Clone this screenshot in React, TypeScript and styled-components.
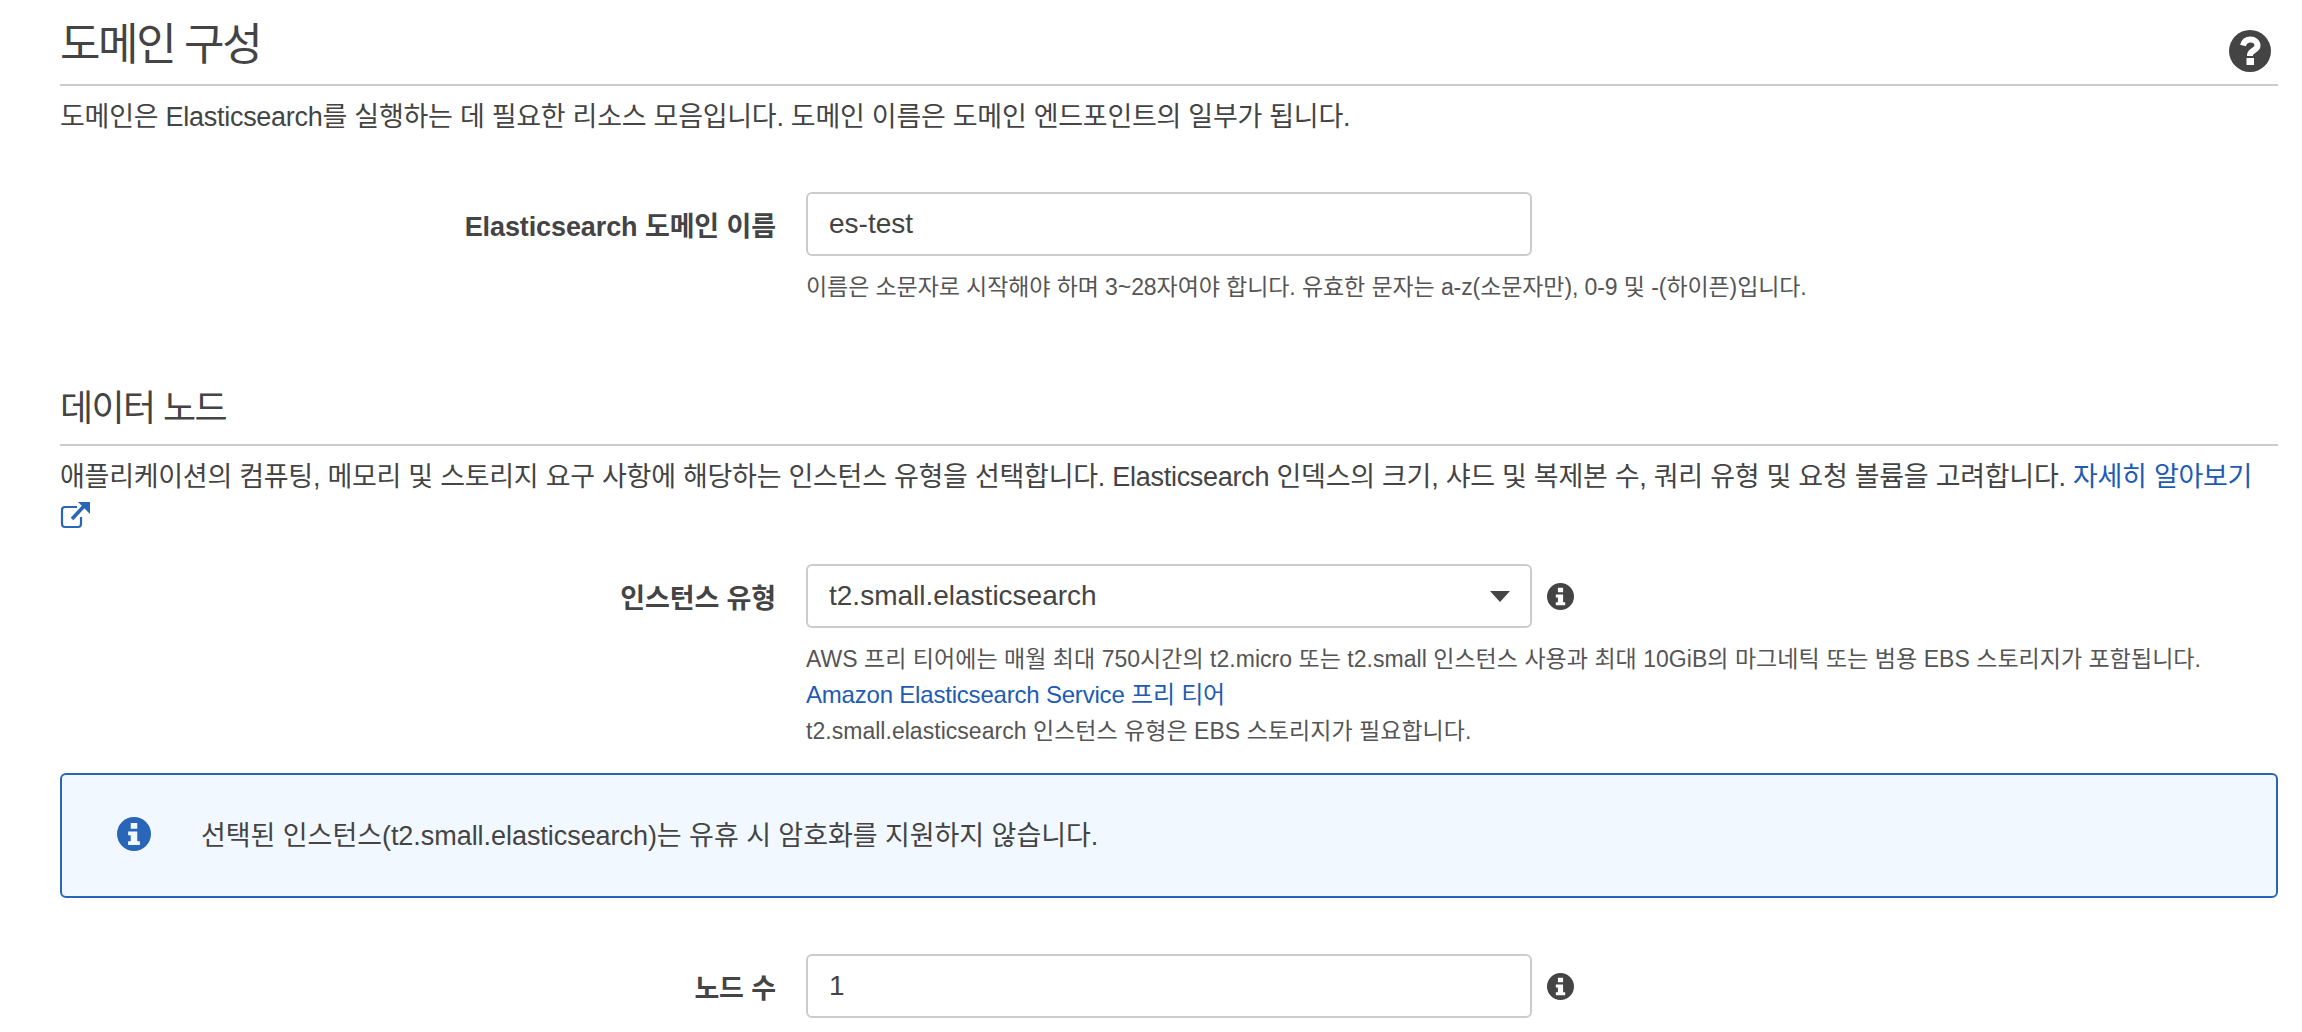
import styled, { createGlobalStyle } from 'styled-components';

const GlobalStyle = createGlobalStyle`
    html, body {
        margin: 0;
        padding: 0;
        background: #fff;
    }
    body {
        font-family: 'Liberation Sans', 'Noto Sans CJK KR', Arial, sans-serif;
        color: #444;
        overflow: hidden;
    }
`;

const Page = styled.div`
    width: 2302px;
    height: 1032px;
    box-sizing: border-box;
    padding: 0 24px 0 60px;
    overflow: hidden;
`;

const SectionHeader = styled.div<{ $height: number; $top?: number }>`
    display: flex;
    align-items: flex-end;
    justify-content: space-between;
    height: ${p => p.$height}px;
    margin-top: ${p => p.$top ?? 0}px;
    border-bottom: 2px solid #ccc;
    box-sizing: content-box;
`;

const Title = styled.h2<{ $size: number; $bottom: number; $spacing: number }>`
    margin: 0 0 ${p => p.$bottom}px;
    font-size: ${p => p.$size}px;
    font-weight: 400;
    line-height: 1.2;
    letter-spacing: ${p => p.$spacing}px;
    color: #444;
`;

const HelpIcon = styled.svg`
    display: block;
    width: 42px;
    height: 42px;
    margin: 0 7px 12px 0;
`;

const Description = styled.p`
    margin: 10px 0 0;
    font-size: 27px;
    line-height: 42px;
    letter-spacing: -0.27px;
    color: #444;
`;

const Link = styled.a`
    color: #1d5bb5;
    text-decoration: none;
`;

const ExternalIcon = styled.svg`
    display: block;
    width: 32px;
    height: 28px;
    margin-top: 3px;
    color: #2a66b8;
`;

const Row = styled.div<{ $top: number }>`
    display: grid;
    grid-template-columns: 716px 726px 1fr;
    column-gap: 30px;
    margin-top: ${p => p.$top}px;
`;

const Label = styled.label`
    display: flex;
    align-items: center;
    justify-content: flex-end;
    height: 64px;
    font-size: 27px;
    font-weight: 700;
    letter-spacing: -0.1px;
    color: #444;
`;

const Input = styled.div`
    position: relative;
    display: flex;
    align-items: center;
    height: 64px;
    box-sizing: border-box;
    padding: 0 21px;
    border: 2px solid #ccc;
    border-radius: 6px;
    font-size: 28px;
    color: #444;
`;

const Caret = styled.span`
    position: absolute;
    right: 20px;
    top: 25px;
    width: 0;
    height: 0;
    border-left: 10px solid transparent;
    border-right: 10px solid transparent;
    border-top: 11px solid #444;
`;

const InfoSlot = styled.span`
    display: flex;
    align-items: center;
    height: 64px;
    margin-left: -15px;
`;

const InfoSvg = styled.svg<{ $size: number; $color: string }>`
    display: block;
    width: ${p => p.$size}px;
    height: ${p => p.$size}px;
    fill: ${p => p.$color};
`;

const Hints = styled.div<{ $top: number; $spacing: number }>`
    grid-column: 2 / 4;
    margin-top: ${p => p.$top}px;
    font-size: 23px;
    line-height: 36px;
    letter-spacing: ${p => p.$spacing}px;
    color: #555;
`;

const HintLink = styled(Link)`
    font-size: 24px;
    letter-spacing: -0.2px;
`;

const Alert = styled.div`
    display: flex;
    align-items: center;
    height: 125px;
    margin-top: 24px;
    box-sizing: border-box;
    padding: 0 0 4px 55px;
    gap: 50px;
    border: 2px solid #2a66b8;
    border-radius: 6px;
    background: #f2f8ff;
    font-size: 27px;
    letter-spacing: -0.05px;
    color: #444;
`;

const InfoGlyph = ({ size, color }: { size: number; color: string }) => (
    <InfoSvg $size={size} $color={color} viewBox="0 0 26 26">
        <path
            fillRule="evenodd"
            d="M13 0a13 13 0 1 1 0 26a13 13 0 0 1 0-26zM10.5 4.5v4.5h5v-4.5zM8.5 11v3h2v4.5h-2v3h9v-3h-2v-7.5z"
        />
    </InfoSvg>
);

const App = () => {
    return (
        <>
            <GlobalStyle />
            <Page>
                <SectionHeader $height={84}>
                    <Title $size={44} $bottom={12} $spacing={-2.4}>도메인 구성</Title>
                    <HelpIcon viewBox="0 0 42 42">
                        <circle cx="21" cy="21" r="21" fill="#444" />
                        <path d="M14 15.5c1-4 4-6 7.5-6 4 0 7 2.5 7 6 0 5-7.5 5-7.5 9.5v1" fill="none" stroke="#fff" strokeWidth="6" />
                        <rect x="17.5" y="28" width="7.5" height="7" fill="#fff" />
                    </HelpIcon>
                </SectionHeader>
                <Description>도메인은 Elasticsearch를 실행하는 데 필요한 리소스 모음입니다. 도메인 이름은 도메인 엔드포인트의 일부가 됩니다.</Description>

                <Row $top={54}>
                    <Label>Elasticsearch 도메인 이름</Label>
                    <Input>es-test</Input>
                    <span />
                    <span />
                    <Hints $top={13} $spacing={-0.09}>이름은 소문자로 시작해야 하며 3~28자여야 합니다. 유효한 문자는 a-z(소문자만), 0-9 및 -(하이픈)입니다.</Hints>
                </Row>

                <SectionHeader $height={76} $top={63}>
                    <Title $size={36} $bottom={14} $spacing={-1.6}>데이터 노드</Title>
                </SectionHeader>
                <Description>
                    애플리케이션의 컴퓨팅, 메모리 및 스토리지 요구 사항에 해당하는 인스턴스 유형을 선택합니다. Elasticsearch 인덱스의 크기, 샤드 및 복제본 수, 쿼리 유형 및 요청 볼륨을 고려합니다. <Link href="#">자세히 알아보기</Link>
                    <Link href="#">
                        <ExternalIcon viewBox="0 0 32 28" fill="none" stroke="currentColor">
                            <path d="M17 6H5a3 3 0 0 0-3 3v14a3 3 0 0 0 3 3h13a3 3 0 0 0 3-3v-7" strokeWidth="2.2" />
                            <path d="M12 18 25 4" strokeWidth="3.6" />
                            <path d="M18 1h12v12z" fill="currentColor" stroke="none" />
                        </ExternalIcon>
                    </Link>
                </Description>

                <Row $top={35}>
                    <Label>인스턴스 유형</Label>
                    <Input>t2.small.elasticsearch<Caret /></Input>
                    <InfoSlot><InfoGlyph size={27} color="#444" /></InfoSlot>
                    <span />
                    <Hints $top={13} $spacing={0.03}>
                        AWS 프리 티어에는 매월 최대 750시간의 t2.micro 또는 t2.small 인스턴스 사용과 최대 10GiB의 마그네틱 또는 범용 EBS 스토리지가 포함됩니다.<br />
                        <HintLink href="#">Amazon Elasticsearch Service 프리 티어</HintLink><br />
                        t2.small.elasticsearch 인스턴스 유형은 EBS 스토리지가 필요합니다.
                    </Hints>
                </Row>

                <Alert>
                    <InfoGlyph size={34} color="#2a66b8" />
                    선택된 인스턴스(t2.small.elasticsearch)는 유휴 시 암호화를 지원하지 않습니다.
                </Alert>

                <Row $top={56}>
                    <Label>노드 수</Label>
                    <Input>1</Input>
                    <InfoSlot><InfoGlyph size={27} color="#444" /></InfoSlot>
                </Row>
            </Page>
        </>
    );
};

export default App;
